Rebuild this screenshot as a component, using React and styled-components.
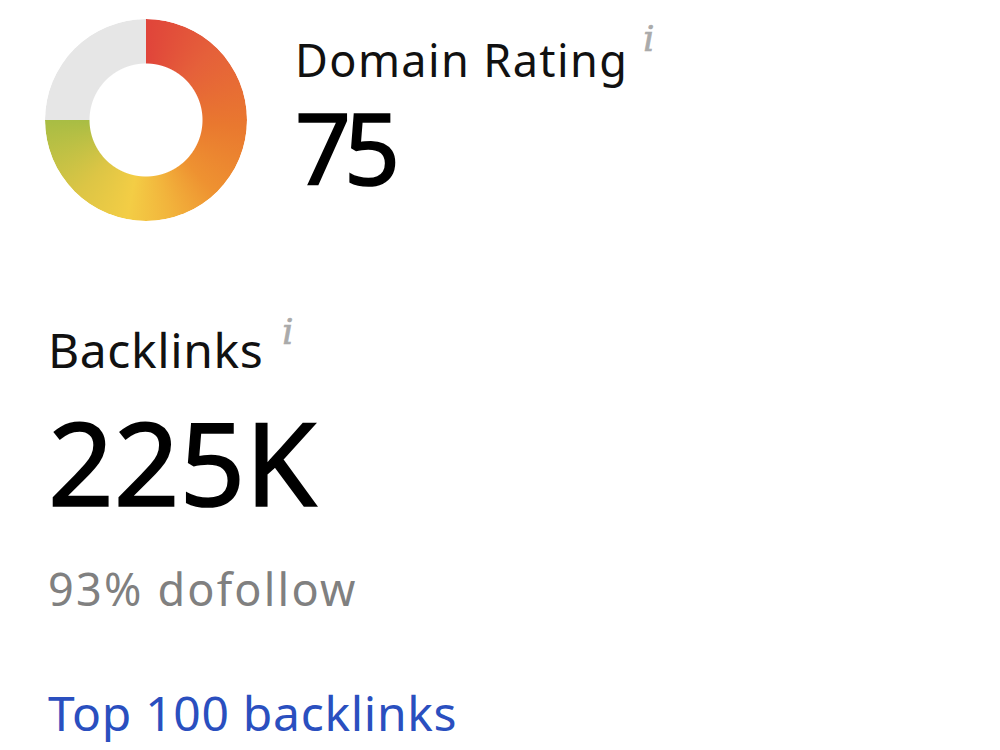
import React from "react";
import styled, { createGlobalStyle } from "styled-components";

const GlobalStyle = createGlobalStyle`
  html, body {
    margin: 0;
    padding: 0;
    background: #ffffff;
  }
  body {
    font-family: "Noto Sans", "Open Sans", sans-serif;
    color: #111;
  }
`;

const Page = styled.div`
  width: 1000px;
  height: 750px;
  overflow: hidden;
  padding: 19px 0 0 45px;
  box-sizing: border-box;
`;

const TopRow = styled.div`
  display: flex;
  align-items: flex-start;
  gap: 48px;
`;

const Donut = styled.div`
  width: 202px;
  height: 202px;
  border-radius: 50%;
  flex-shrink: 0;
  background: conic-gradient(
    #e0443a 0%,
    #e5603a 12%,
    #e9782f 26%,
    #ee9231 38%,
    #f2b43c 46%,
    #f3cd45 53%,
    #dcc545 62%,
    #a8bd44 75%,
    #e6e6e6 75%,
    #e6e6e6 100%
  );
  mask-image: radial-gradient(circle, transparent 56px, #000 57px);
  -webkit-mask-image: radial-gradient(circle, transparent 56px, #000 57px);
`;

const RatingText = styled.div`
  padding-top: 14px;
  display: flex;
  flex-direction: column;
`;

const Label = styled.div`
  font-size: ${(p) => p.size}px;
  letter-spacing: ${(p) => p.spacing}px;
  line-height: 1.2;
  color: #111;
  white-space: nowrap;
`;

const Info = styled.span`
  display: inline-block;
  vertical-align: top;
  font-family: "DejaVu Serif", "Liberation Serif", serif;
  font-style: italic;
  font-size: 35px;
  letter-spacing: 0;
  line-height: 1;
  color: #aaaaaa;
  -webkit-text-stroke: 0.7px #aaaaaa;
  margin-left: ${(p) => p.gap}px;
  margin-top: ${(p) => p.lift}px;
`;

const Value = styled.div`
  font-size: ${(p) => p.size}px;
  letter-spacing: ${(p) => p.spacing || 0}px;
  line-height: 1.2;
  color: #000;
  -webkit-text-stroke: 1.6px #000;
  margin-top: ${(p) => p.offset || 0}px;
`;

const Section = styled.div`
  margin-top: 100px;
  padding-left: 3px;
  display: flex;
  flex-direction: column;
`;

const Note = styled.div`
  font-size: 45px;
  letter-spacing: 2.2px;
  line-height: 1.2;
  color: #808080;
  margin-top: 31px;
`;

const Link = styled.a`
  font-size: 48px;
  letter-spacing: 0.7px;
  line-height: 1.2;
  color: #2a4fbf;
  text-decoration: none;
  margin-top: 68px;
`;

export default function App() {
  return (
    <>
      <GlobalStyle />
      <Page>
        <TopRow>
          <Donut />
          <RatingText>
            <Label size={45} spacing={1.4}>
              Domain Rating
              <Info gap={15} lift={-11}>i</Info>
            </Label>
            <Value size={98} spacing={-7} offset={2}>75</Value>
          </RatingText>
        </TopRow>
        <Section>
          <Label size={48} spacing={0.6}>
            Backlinks
            <Info gap={19} lift={-6}>i</Info>
          </Label>
          <Value size={115} offset={14}>225K</Value>
          <Note>93% dofollow</Note>
          <Link href="#">Top 100 backlinks</Link>
        </Section>
      </Page>
    </>
  );
}
